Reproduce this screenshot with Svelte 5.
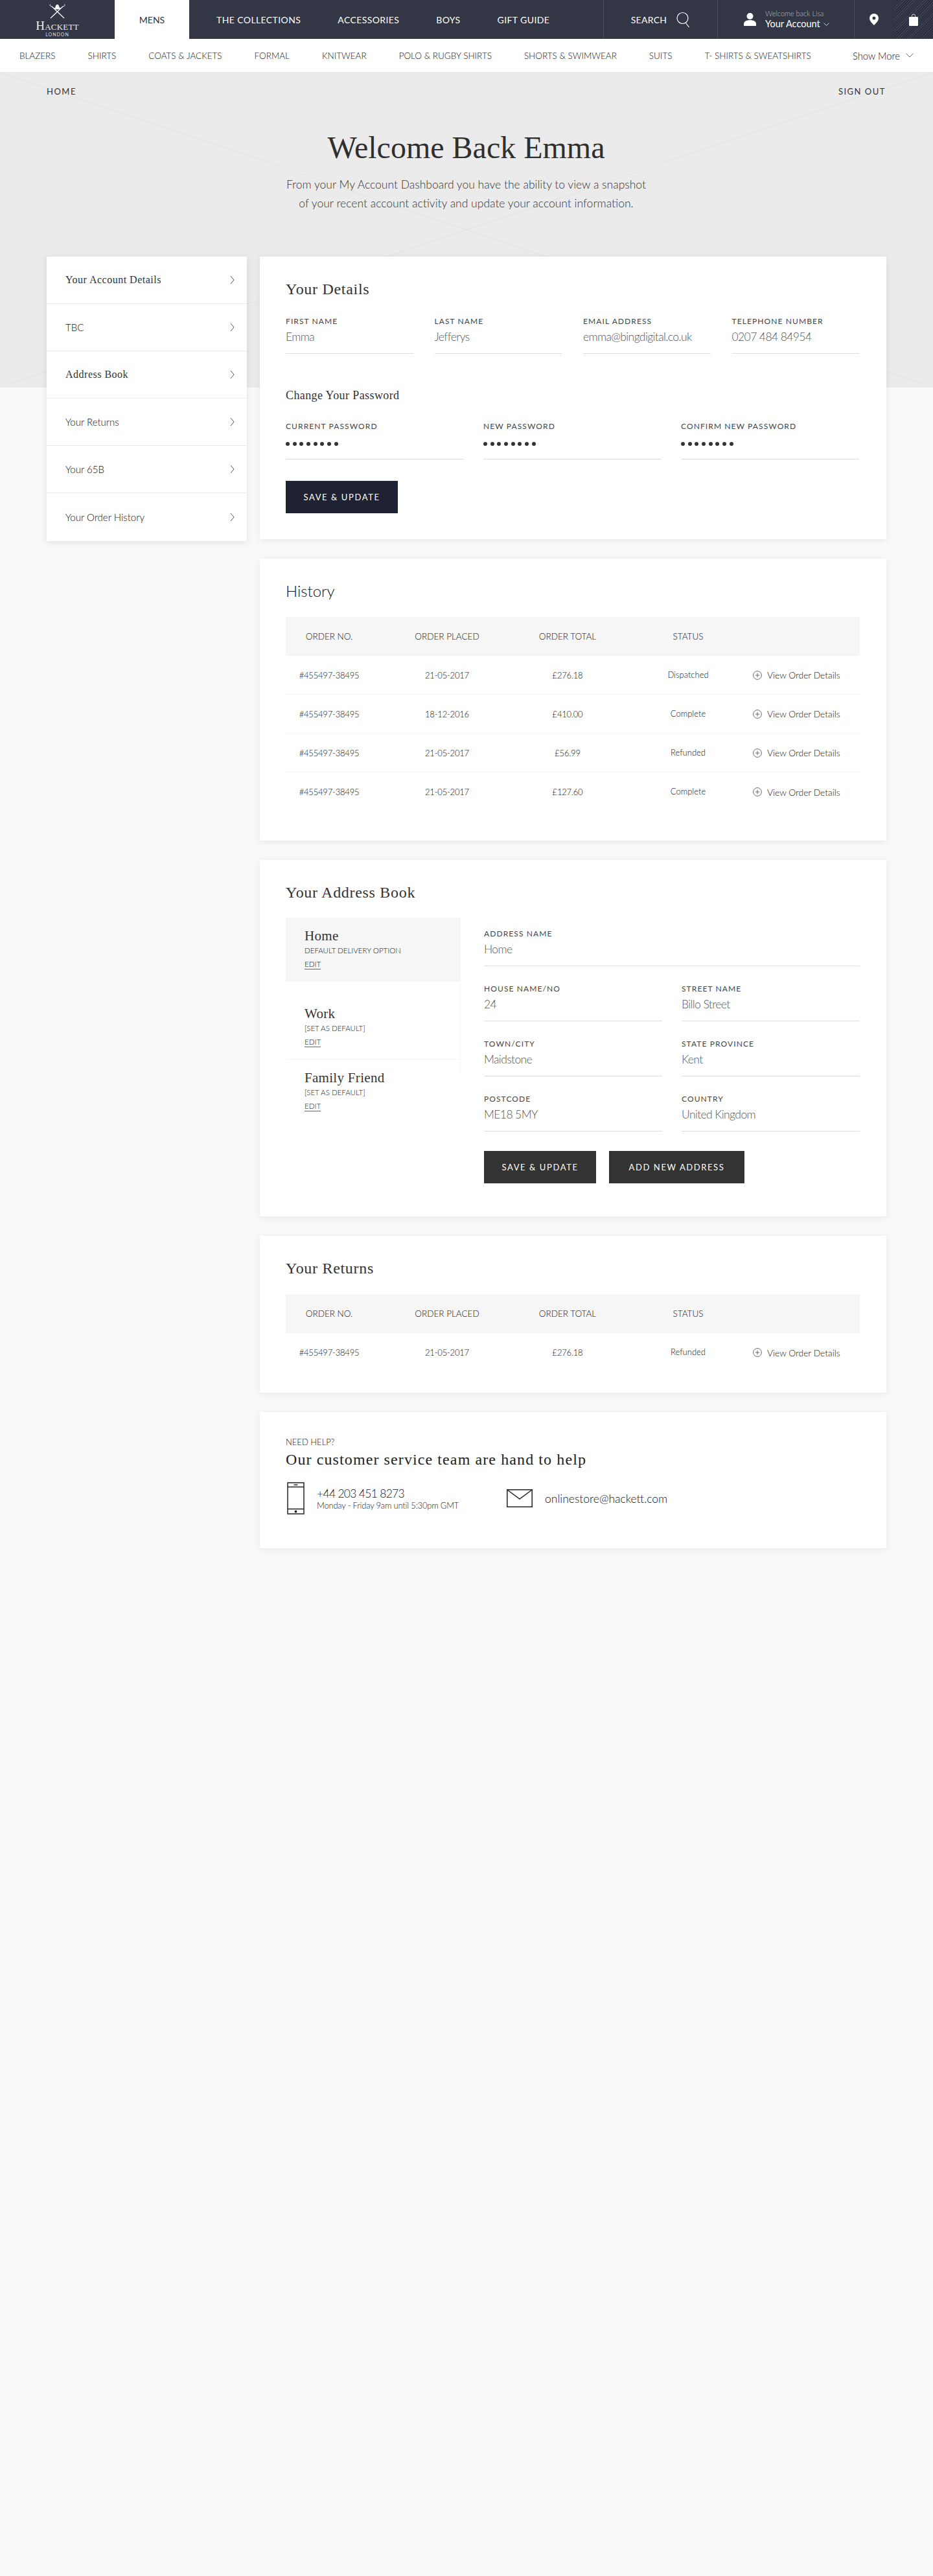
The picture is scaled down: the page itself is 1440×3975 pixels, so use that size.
<script>
  const navItems = [
    { label: "MENS", active: true },
    { label: "THE COLLECTIONS" },
    { label: "ACCESSORIES" },
    { label: "BOYS" },
    { label: "GIFT GUIDE" }
  ];

  const subNav = [
    "BLAZERS",
    "SHIRTS",
    "COATS & JACKETS",
    "FORMAL",
    "KNITWEAR",
    "POLO & RUGBY SHIRTS",
    "SHORTS & SWIMWEAR",
    "SUITS",
    "T- SHIRTS & SWEATSHIRTS"
  ];

  const sideLinks = [
    "Your Account Details",
    "TBC",
    "Address Book",
    "Your Returns",
    "Your 65B",
    "Your Order History"
  ];

  const details = [
    { label: "FIRST NAME", value: "Emma" },
    { label: "LAST NAME", value: "Jefferys" },
    { label: "EMAIL ADDRESS", value: "emma@bingdigital.co.uk" },
    { label: "TELEPHONE NUMBER", value: "0207 484 84954" }
  ];

  const passwords = ["CURRENT PASSWORD", "NEW PASSWORD", "CONFIRM NEW PASSWORD"];

  const orders = [
    { date: "21-05-2017", total: "£276.18", status: "Dispatched" },
    { date: "18-12-2016", total: "£410.00", status: "Complete" },
    { date: "21-05-2017", total: "£56.99", status: "Refunded" },
    { date: "21-05-2017", total: "£127.60", status: "Complete" }
  ];

  const returns = [{ date: "21-05-2017", total: "£276.18", status: "Refunded" }];

  const addresses = [
    { name: "Home", note: "DEFAULT DELIVERY OPTION", active: true },
    { name: "Work", note: "[SET AS DEFAULT]" },
    { name: "Family Friend", note: "[SET AS DEFAULT]" }
  ];

  const addressFields = [
    { label: "HOUSE NAME/NO", value: "24" },
    { label: "STREET NAME", value: "Billo Street" },
    { label: "TOWN/CITY", value: "Maidstone" },
    { label: "STATE PROVINCE", value: "Kent" },
    { label: "POSTCODE", value: "ME18 5MY" },
    { label: "COUNTRY", value: "United Kingdom" }
  ];
</script>

{#snippet orderTable(rows)}
  <div class="table">
    <div class="row head">
      <span>ORDER NO.</span>
      <span>ORDER PLACED</span>
      <span>ORDER TOTAL</span>
      <span>STATUS</span>
    </div>
    {#each rows as order}
      <div class="row">
        <span>#455497-38495</span>
        <span>{order.date}</span>
        <span>{order.total}</span>
        <span class="status">{order.status}</span>
        <a class="view" href="#top">
          <svg width="14" height="14" viewBox="0 0 14 14" fill="none" stroke="#444" stroke-width="0.8">
            <circle cx="7" cy="7" r="6.4" />
            <path d="M3.8 7h6.4M7 3.8v6.4" />
          </svg>
          View Order Details
        </a>
      </div>
    {/each}
  </div>
{/snippet}

<header class="topbar">
  <a class="logo" href="#top">
    <svg width="27" height="23" viewBox="0 0 27 23" fill="none" stroke="#fff" stroke-width="1.3">
      <path d="M5 4 24 22M22 4 3 22" />
      <path d="M5 4C2 4 1 1 3 1M22 4c3 0 4-3 2-3" stroke-width="1" />
      <path d="M8.500 7c0-1 1.500-1 2-1.500 0-6 6-6 6 0 .5.500 2 .5 2 1.500-3 2-7 2-10 0z" fill="#fff" stroke="none" />
    </svg>
    <span class="logo-name">Hackett</span>
    <span class="logo-sub">LONDON</span>
  </a>
  <nav class="mainnav">
    {#each navItems as item}
      <a href="#top" class:active={item.active}>{item.label}</a>
    {/each}
  </nav>
  <div class="tools">
    <div class="tool search">
      SEARCH
      <svg width="21" height="25" viewBox="0 0 21 25" fill="none" stroke="#fff" stroke-width="1.2">
        <circle cx="9.500" cy="10" r="8.500" />
        <path d="M14.500 17.500 19.500 24" />
      </svg>
    </div>
    <div class="tool account">
      <svg width="19" height="20" viewBox="0 0 19 20" fill="#fff">
        <circle cx="9.500" cy="5" r="5" />
        <path d="M0 20v-3c0-4 4-6 9.500-6s9.500 2 9.500 6v3z" />
      </svg>
      <div class="account-text">
        <span class="welcome">Welcome back Lisa</span>
        <span class="your">Your Account
          <svg width="9" height="5" viewBox="0 0 9 5" fill="none" stroke="#fff" stroke-width="0.8"><path d="M0.500 0.500 4.500 4.500 8.500 0.500" /></svg>
        </span>
      </div>
    </div>
    <div class="tool pin">
      <svg width="14" height="18" viewBox="0 0 14 18">
        <path fill="#fff" fill-rule="evenodd" d="M7 0a7 7 0 0 1 7 7c0 4-4 8-7 11C4 15 0 11 0 7a7 7 0 0 1 7-7zm0 4.500a2.500 2.500 0 1 0 0 5 2.500 2.500 0 0 0 0-5z" />
      </svg>
    </div>
    <div class="tool bag">
      <svg width="14" height="19" viewBox="0 0 14 19" fill="none">
        <path d="M4.500 5V3.500a2.500 2.500 0 0 1 5 0V5" stroke="#fff" stroke-width="0.8" />
        <path d="M1 5h12a1 1 0 0 1 1 1v11.500a1.500 1.500 0 0 1-1.500 1.500h-11A1.500 1.500 0 0 1 0 17.500V6a1 1 0 0 1 1-1z" fill="#fff" />
      </svg>
    </div>
  </div>
</header>

<nav class="subnav">
  <div class="subnav-links">
    {#each subNav as item}
      <a href="#top">{item}</a>
    {/each}
  </div>
  <a class="more" href="#top">
    Show More
    <svg width="12" height="7" viewBox="0 0 12 7" fill="none" stroke="#555" stroke-width="0.9"><path d="M0.500 0.500 6 6 11.500 0.500" /></svg>
  </a>
</nav>

<section class="hero">
  <div class="crumbs">
    <a href="#top">HOME</a>
    <a href="#top">SIGN OUT</a>
  </div>
  <h1>Welcome Back Emma</h1>
  <p>From your My Account Dashboard you have the ability to view a snapshot<br />of your recent account activity and update your account information.</p>
</section>

<div class="content">
  <aside class="sidebar">
    {#each sideLinks as link, i}
      <a href="#top" class:serif={i === 0 || i === 2}>
        {link}
        <svg width="7" height="14" viewBox="0 0 7 14" fill="none" stroke="#444" stroke-width="0.9"><path d="M1 1 6 7 1 13" /></svg>
      </a>
    {/each}
  </aside>

  <main class="cards">
    <section class="card details">
      <h2>Your Details</h2>
      <div class="grid-four">
        {#each details as field}
          <div class="field">
            <label for={field.label}>{field.label}</label>
            <div class="value" id={field.label}>{field.value}</div>
          </div>
        {/each}
      </div>
      <h3>Change Your Password</h3>
      <div class="grid-three">
        {#each passwords as label}
          <div class="field pass">
            <label for={label}>{label}</label>
            <div class="dots" id={label}>
              {#each Array(8) as _}<i></i>{/each}
            </div>
          </div>
        {/each}
      </div>
      <button class="btn navy">SAVE &amp; UPDATE</button>
    </section>

    <section class="card history">
      <h2 class="plain">History</h2>
      {@render orderTable(orders)}
    </section>

    <section class="card book">
      <h2>Your Address Book</h2>
      <div class="book-body">
        <div class="book-list">
          {#each addresses as address}
            <div class="address" class:active={address.active}>
              <h4>{address.name}</h4>
              <span class="note">{address.note}</span>
              <a href="#top">EDIT</a>
            </div>
          {/each}
        </div>
        <div class="book-form">
          <div class="field wide">
            <label for="address-name">ADDRESS NAME</label>
            <div class="value" id="address-name">Home</div>
          </div>
          {#each addressFields as field}
            <div class="field">
              <label for={field.label}>{field.label}</label>
              <div class="value" id={field.label}>{field.value}</div>
            </div>
          {/each}
          <div class="actions">
            <button class="btn">SAVE &amp; UPDATE</button>
            <button class="btn">ADD NEW ADDRESS</button>
          </div>
        </div>
      </div>
    </section>

    <section class="card returns">
      <h2>Your Returns</h2>
      {@render orderTable(returns)}
    </section>

    <section class="card help">
      <span class="need">NEED HELP?</span>
      <h5>Our customer service team are hand to help</h5>
      <div class="contact">
        <div class="phone">
          <svg width="27" height="50" viewBox="0 0 27 50" fill="none" stroke="#222" stroke-width="1.500">
            <rect x="1" y="1" width="25" height="48" />
            <path d="M1 7.500h25M1 41.500h25" />
            <path d="M10.500 4.300h6" />
            <circle cx="13.500" cy="45.500" r="1.200" fill="#222" />
          </svg>
          <div>
            <div class="tel">+44 203 451 8273</div>
            <div class="hours">Monday - Friday 9am until 5:30pm GMT</div>
          </div>
        </div>
        <div class="mail">
          <svg width="40" height="28" viewBox="0 0 40 28" fill="none" stroke="#222" stroke-width="1.500">
            <rect x="0.800" y="0.800" width="38.400" height="26.400" />
            <path d="M1 1 20 15 39 1" />
          </svg>
          <span>onlinestore@hackett.com</span>
        </div>
      </div>
    </section>
  </main>
</div>

<style>
  :global(body) {
    background: #f9f9f9;
    color: #333;
    font-family: "Lato", "Liberation Sans", sans-serif;
    min-height: 3975px;
  }

  a {
    color: inherit;
    text-decoration: none;
  }

  h1, h2, h3, h4, h5, p {
    margin: 0;
    font-weight: 400;
  }

  .topbar {
    display: flex;
    height: 60px;
    background: #333645;
    color: #fff;
  }

  .logo {
    width: 177px;
    flex: none;
    display: flex;
    flex-direction: column;
    align-items: center;
    padding-top: 6px;
    box-sizing: border-box;
  }

  .logo-name {
    font-family: "Liberation Serif", serif;
    font-variant: small-caps;
    font-size: 19px;
    line-height: 16px;
    letter-spacing: 0.2px;
    margin-top: 3px;
    color: #eee;
  }

  .logo-sub {
    font-size: 7px;
    line-height: 8px;
    letter-spacing: 1px;
    color: #ddd;
    margin-top: 1px;
  }

  .mainnav {
    display: flex;
    flex: 1;
  }

  .mainnav a {
    display: flex;
    align-items: center;
    font-size: 14px;
    padding-right: 57px;
    font-weight: 400;
  }

  .mainnav a:not(.active) {
    letter-spacing: 0.4px;
  }

  .mainnav a.active {
    background: #fff;
    color: #333;
    width: 115px;
    box-sizing: border-box;
    padding: 0;
    justify-content: center;
    margin-right: 42px;
  }

  .tools {
    display: flex;
    flex: none;
  }

  .tool {
    display: flex;
    align-items: center;
    justify-content: center;
    height: 60px;
    box-sizing: border-box;
    border-left: 1px solid #4a4d5b;
  }

  .search {
    width: 176px;
    gap: 15px;
    font-size: 14px;
    letter-spacing: 0.3px;
  }

  .account {
    width: 211px;
    gap: 14px;
    justify-content: flex-start;
    padding-left: 40px;
  }

  .account-text {
    display: flex;
    flex-direction: column;
  }

  .welcome {
    font-size: 11px;
    line-height: 14px;
    color: #b9bac2;
    font-weight: 300;
  }

  .your {
    font-size: 14.500px;
    line-height: 18px;
  }

  .your svg {
    vertical-align: 2px;
    margin-left: 2px;
  }

  .pin {
    width: 61px;
  }

  .bag {
    width: 61px;
    border-left: 0;
    background: repeating-linear-gradient(135deg, #3f4250 0 1px, #2d3040 1px 3px);
  }

  .subnav {
    display: flex;
    align-items: center;
    justify-content: space-between;
    height: 51px;
    background: #fff;
    padding: 0 30px;
    font-size: 13.500px;
    font-weight: 300;
    color: #111;
  }

  .subnav-links {
    display: flex;
    gap: 50px;
  }

  .more {
    display: flex;
    align-items: center;
    gap: 9px;
    font-size: 14.800px;
  }

  .hero {
    height: 487px;
    box-sizing: border-box;
    padding: 22px 73px 0 72px;
    background:
      linear-gradient(to top right, transparent calc(50% - 1px), #e2e2e2 50%, transparent calc(50% + 1px)),
      linear-gradient(to bottom right, transparent calc(50% - 1px), #e2e2e2 50%, transparent calc(50% + 1px)),
      #ebebeb;
    text-align: center;
  }

  .crumbs {
    display: flex;
    justify-content: space-between;
    font-size: 13px;
    line-height: 16px;
    letter-spacing: 1.500px;
    font-weight: 400;
  }

  h1 {
    font-family: "Liberation Serif", serif;
    font-size: 48px;
    line-height: 56px;
    margin-top: 51px;
    color: #2f2f2f;
  }

  .hero p {
    font-size: 17.500px;
    line-height: 29px;
    font-weight: 300;
    margin-top: 14px;
    color: #333;
  }

  .content {
    display: flex;
    align-items: flex-start;
    gap: 20px;
    margin-top: -202px;
    padding: 0 73px 0 72px;
  }

  .sidebar {
    width: 309px;
    flex: none;
    background: #fff;
    box-shadow: 0 2px 10px rgba(0, 0, 0, 0.1);
  }

  .sidebar a {
    display: flex;
    align-items: center;
    justify-content: space-between;
    height: 73px;
    box-sizing: border-box;
    padding: 0 19px 0 29px;
    border-bottom: 1px solid #ececec;
    font-size: 15px;
    font-weight: 300;
    color: #111;
  }

  .sidebar a:last-child {
    border-bottom: 0;
    height: 74px;
  }

  .sidebar a.serif {
    font-family: "Liberation Serif", serif;
    font-weight: 400;
    font-size: 16px;
    letter-spacing: 0.5px;
    color: #333;
  }

  .cards {
    flex: 1;
    display: flex;
    flex-direction: column;
    gap: 30px;
  }

  .card {
    background: #fff;
    box-shadow: 0 2px 10px rgba(0, 0, 0, 0.08);
    padding: 36px 41px 0 40px;
    box-sizing: border-box;
  }

  h2 {
    font-family: "Liberation Serif", serif;
    font-size: 24px;
    line-height: 28px;
    letter-spacing: 0.7px;
    color: #333;
  }

  h2.plain {
    font-family: "Lato", sans-serif;
    font-weight: 300;
    letter-spacing: 0;
    color: #111;
  }

  .details {
    height: 436px;
  }

  .history {
    height: 435px;
  }

  .book {
    height: 550px;
  }

  .returns {
    height: 242px;
  }

  .help {
    height: 210px;
    padding-top: 38px;
  }

  .grid-four {
    display: grid;
    grid-template-columns: repeat(4, 196.500px);
    gap: 33px;
    margin-top: 28px;
  }

  .field {
    display: flex;
    flex-direction: column;
    border-bottom: 1px solid #ddd;
    height: 58px;
    box-sizing: border-box;
  }

  label {
    font-size: 12px;
    line-height: 16px;
    letter-spacing: 1.100px;
    color: #444;
  }

  .value {
    font-size: 17.500px;
    line-height: 24px;
    letter-spacing: -0.600px;
    margin-top: 4px;
    font-weight: 300;
    color: #555;
  }

  h3 {
    font-family: "Liberation Serif", serif;
    font-size: 18px;
    line-height: 22px;
    letter-spacing: 0.4px;
    margin-top: 53px;
    color: #333;
  }

  .grid-three {
    display: grid;
    grid-template-columns: repeat(3, 275px);
    gap: 30px;
    margin-top: 29px;
  }

  .pass {
    height: 59px;
  }

  .dots {
    display: flex;
    gap: 4.700px;
    margin-top: 16px;
  }

  .dots i {
    width: 6px;
    height: 6px;
    border-radius: 50%;
    background: #333;
  }

  .btn {
    height: 50px;
    width: 173px;
    border: 0;
    background: #333;
    color: #fff;
    font-family: inherit;
    font-size: 13px;
    letter-spacing: 1.600px;
    padding: 0;
  }

  .btn.navy {
    background: #1f2233;
    margin-top: 33px;
  }

  .table {
    margin-top: 26px;
  }

  .row {
    display: grid;
    grid-template-columns: 156px 186px 186px 186px 1fr;
    align-items: center;
    height: 60px;
    font-size: 13px;
    letter-spacing: -0.200px;
    font-weight: 300;
    color: #111;
    text-align: center;
    border-bottom: 1px solid #f7f7f7;
    box-sizing: border-box;
  }

  .row:last-child {
    border-bottom: 0;
  }

  .row > span:first-child {
    padding-right: 22px;
  }

  .row.head {
    background: #f6f6f6;
    border-bottom: 0;
    font-size: 13.500px;
    letter-spacing: 0;
  }

  .status {
    font-size: 13px;
    margin-top: -2px;
    letter-spacing: 0;
  }

  .view {
    display: flex;
    align-items: center;
    gap: 8px;
    padding-left: 7px;
    font-size: 13.800px;
    letter-spacing: 0;
    white-space: nowrap;
  }

  .book-body {
    display: flex;
    margin-top: 25px;
  }

  .book-list {
    width: 269px;
    flex: none;
    border-right: 1px solid #f7f7f7;
    height: 243px;
  }

  .address {
    height: 99px;
    box-sizing: border-box;
    padding: 15px 0 0 29px;
    display: flex;
    flex-direction: column;
    align-items: flex-start;
    border-bottom: 1px solid #f4f4f4;
  }

  .address.active {
    background: #f6f6f6;
    border-bottom: 0;
    margin-bottom: 21px;
  }

  .address:last-child {
    border-bottom: 0;
  }

  h4 {
    font-family: "Liberation Serif", serif;
    font-size: 21px;
    line-height: 26px;
    letter-spacing: 0.3px;
  }

  .note {
    font-size: 11.500px;
    line-height: 16px;
    margin-top: 2px;
    font-weight: 300;
    color: #111;
  }

  .address a {
    font-size: 11.500px;
    line-height: 14px;
    margin-top: 6px;
    font-weight: 300;
    color: #111;
    border-bottom: 1px solid #666;
  }

  .book-form {
    margin-left: 36px;
    width: 580px;
    display: grid;
    grid-template-columns: 275px 275px;
    column-gap: 30px;
    row-gap: 27px;
    padding-top: 17px;
    align-content: start;
  }

  .wide {
    grid-column: 1 / 3;
  }

  .actions {
    grid-column: 1 / 3;
    display: flex;
    gap: 20px;
    margin-top: 3px;
  }

  .actions .btn:last-child {
    width: 209px;
  }

  .need {
    display: block;
    font-size: 13px;
    line-height: 16px;
    font-weight: 300;
    color: #111;
  }

  h5 {
    font-family: "Liberation Serif", serif;
    font-size: 24px;
    line-height: 28px;
    margin-top: 5px;
    letter-spacing: 1.100px;
    color: #222;
  }

  .contact {
    display: flex;
    align-items: center;
    margin-top: 21px;
    padding-left: 2px;
  }

  .phone {
    display: flex;
    align-items: center;
    gap: 19px;
    width: 339px;
  }

  .tel {
    font-size: 17.500px;
    line-height: 22px;
    letter-spacing: -0.700px;
    font-weight: 300;
    color: #111;
  }

  .hours {
    font-size: 13px;
    line-height: 15px;
    letter-spacing: -0.200px;
    font-weight: 300;
    color: #222;
  }

  .mail {
    display: flex;
    align-items: center;
    gap: 19px;
    font-size: 17.500px;
    font-weight: 300;
    color: #111;
  }
</style>
